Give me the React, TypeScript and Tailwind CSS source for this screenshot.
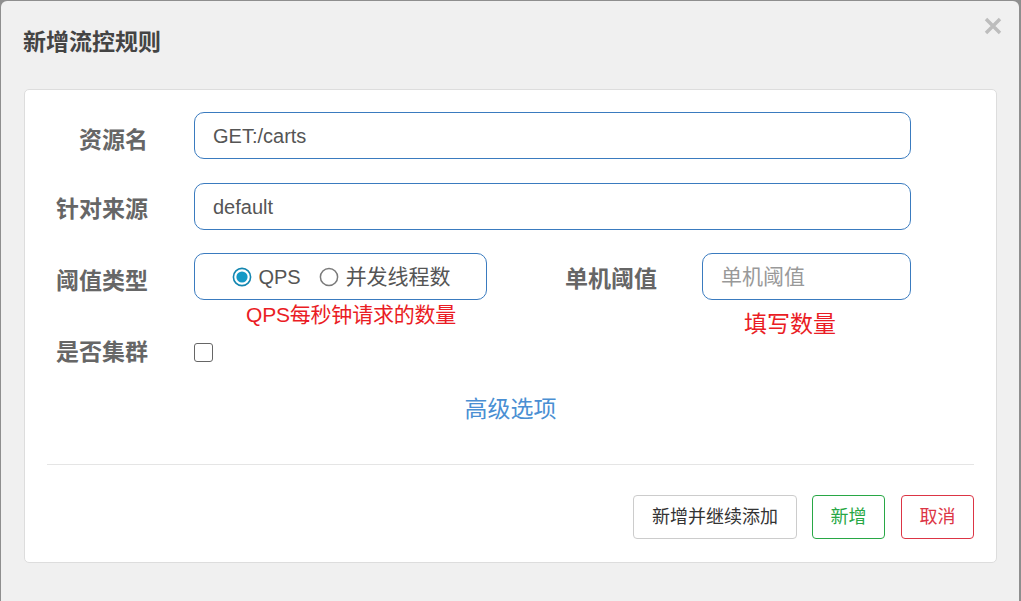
import React from "react";

const font = { fontFamily: "'Liberation Sans', 'Noto Sans CJK SC', sans-serif" };

function Radio({ checked }: { checked: boolean }) {
  return (
    <svg width="20" height="20" viewBox="0 0 20 20" className="shrink-0">
      {checked ? (
        <>
          <circle cx="10" cy="10" r="8.6" fill="#fff" stroke="#1386b0" strokeWidth="1.6" />
          <circle cx="10" cy="10" r="5.6" fill="#1499c6" />
        </>
      ) : (
        <circle cx="10" cy="10" r="8.6" fill="#fff" stroke="#7a7a7a" strokeWidth="1.5" />
      )}
    </svg>
  );
}

export default function App() {
  return (
    <div className="w-[1021px] h-[601px] bg-[#8e8e8e] pl-px pt-px pr-[2px] overflow-hidden" style={font}>
      <div className="relative w-full h-[610px] bg-[#f0f0f0] rounded-[6px] flex flex-col">
        <div className="h-[88px] pl-[22px] pt-[26px]">
          <h1 className="text-[23px] leading-[30px] font-bold text-[#444]">新增流控规则</h1>
        </div>
        <button className="absolute top-[16px] right-[17px] w-[18px] h-[18px]" aria-label="close">
          <svg width="18" height="18" viewBox="0 0 18 18">
            <path d="M2 2 L16 16 M16 2 L2 16" stroke="#bdbdbd" strokeWidth="3.4" strokeLinecap="butt" />
          </svg>
        </button>
        <div className="ml-[23px] w-[973px] h-[474px] bg-white border border-[#dddddd] rounded-[5px] px-[22px] pt-[22px]">
          {/* Row 1 */}
          <div className="flex items-center h-[47px]">
            <label className="w-[101px] pt-[9px] text-right text-[23px] font-bold text-[#666]">资源名</label>
            <div className="ml-[46px] w-[717px] h-[47px] border border-[#3a7bbf] rounded-[10px] flex items-center pl-[18px] text-[20px] text-[#555]">
              GET:/carts
            </div>
          </div>
          {/* Row 2 */}
          <div className="flex items-center h-[47px] mt-[24px]">
            <label className="w-[101px] pt-[6px] text-right text-[23px] font-bold text-[#666]">针对来源</label>
            <div className="ml-[46px] w-[717px] h-[47px] border border-[#3a7bbf] rounded-[10px] flex items-center pl-[18px] text-[20px] text-[#555]">
              default
            </div>
          </div>
          {/* Row 3 */}
          <div className="flex mt-[23px]">
            <label className="w-[101px] h-[47px] pt-[10px] flex items-center justify-end text-[23px] font-bold text-[#666]">阈值类型</label>
            <div className="ml-[46px] flex flex-col">
              <div className="w-[293px] h-[47px] border border-[#3a7bbf] rounded-[10px] flex items-center justify-center pl-[2px] text-[20px] text-[#555]">
                <Radio checked />
                <span className="ml-[6px] leading-[24px]">QPS</span>
                <span className="ml-[18px]"><Radio checked={false} /></span>
                <span className="ml-[7px] leading-[24px] text-[21px]">并发线程数</span>
              </div>
              <div className="mt-[4px] pl-[52px] text-[21px] leading-[22px] text-[#ea1c24] tracking-[-0.2px]">QPS每秒钟请求的数量</div>
            </div>
            <label className="w-[170px] h-[47px] pt-[6px] flex items-center justify-end text-[23px] font-bold text-[#666]">单机阈值</label>
            <div className="ml-[45px] flex flex-col">
              <div className="w-[209px] h-[47px] border border-[#3a7bbf] rounded-[10px] flex items-center pl-[18px] text-[21px] text-[#999]">
                单机阈值
              </div>
              <div className="mt-[12px] pl-[42px] text-[23px] leading-[24px] text-[#ea1c24]">填写数量</div>
            </div>
          </div>
          {/* Row 4 */}
          <div className="flex items-center h-[32px]">
            <label className="w-[101px] text-right text-[23px] font-bold text-[#666]">是否集群</label>
            <div className="ml-[46px] w-[19px] h-[19px] border-[1.5px] border-[#666] rounded-[3px] bg-white" />
          </div>
          {/* Advanced */}
          <div className="mt-[26px] h-[30px] flex justify-center">
            <span className="text-[23px] leading-[30px] text-[#4a8fd3]">高级选项</span>
          </div>
          <div className="mt-[40px] border-t border-[#e5e5e5]" />
          <div className="mt-[30px] flex justify-end gap-[15px]">
            <button className="w-[164px] h-[44px] border border-[#cccccc] rounded-[4px] text-[18px] text-[#333] bg-white">
              新增并继续添加
            </button>
            <button className="w-[73px] h-[44px] border border-[#28a745] rounded-[4px] text-[18px] text-[#28a745] bg-white">
              新增
            </button>
            <button className="ml-px w-[73px] h-[44px] border border-[#dc3545] rounded-[4px] text-[18px] text-[#dc3545] bg-white">
              取消
            </button>
          </div>
        </div>
      </div>
    </div>
  );
}
